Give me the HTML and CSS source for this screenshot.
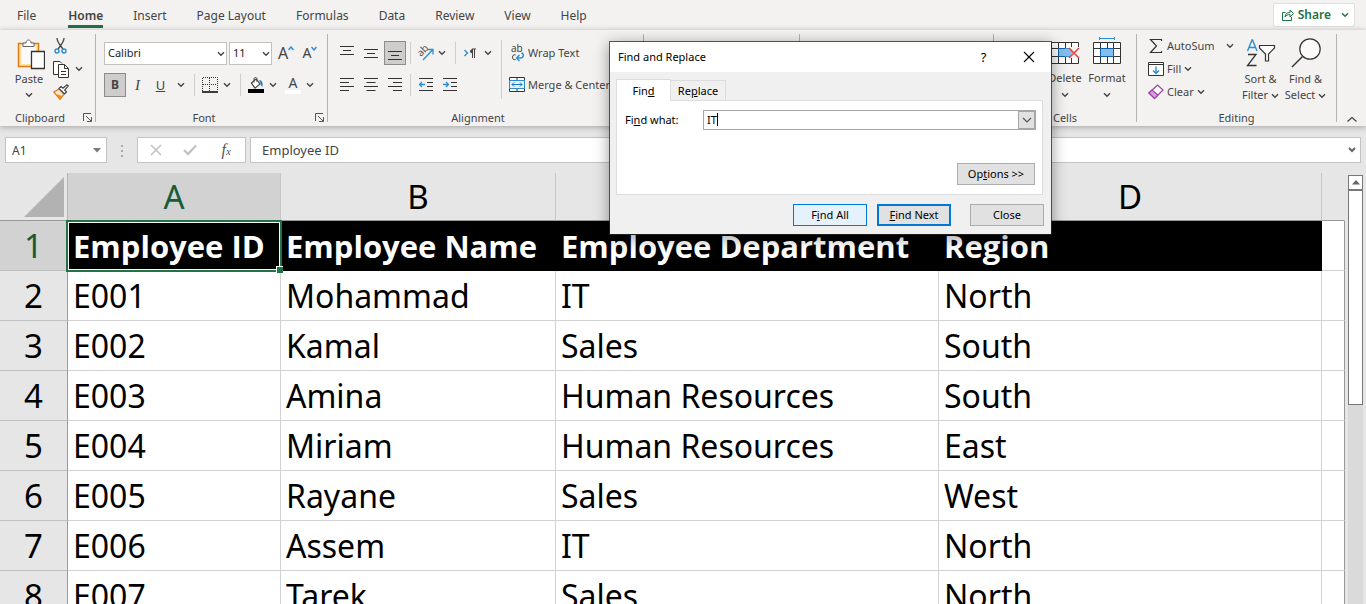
FILE: index.html
```html
<!DOCTYPE html>
<html lang="en">
<head>
<meta charset="utf-8">
<title>Employees - Spreadsheet</title>
<link rel="stylesheet" href="styles.css">
</head>
<body>
<svg class="defs" aria-hidden="true">
  <symbol id="chev" viewBox="0 0 8 6"><path d="M1 1.2 4 4.2 7 1.2" fill="none" stroke="#444" stroke-width="1.4"/></symbol>
  <symbol id="launch" viewBox="0 0 9 9"><path d="M.5 8V.5H8M3 3l5 5M8.500 4v4.500H4" fill="none" stroke="#555"/></symbol>
  <symbol id="grid" viewBox="0 0 30 28"><path d="M1.500 5.500h27v21h-27zM1.500 11.500h27M1.500 19.500h27M8.500 5v22M21.500 5v22M15.500 5v6M15.500 20v6" fill="#fff" stroke="#333"/><path d="M8.500 11.500h13v8h-13z" fill="#83beec" stroke="#0f5fa8"/></symbol>
</svg>

<nav class="tabs">
  <a href="#file">File</a>
  <a href="#home" class="active">Home</a>
  <a href="#insert">Insert</a>
  <a href="#layout">Page Layout</a>
  <a href="#formulas">Formulas</a>
  <a href="#data">Data</a>
  <a href="#review">Review</a>
  <a href="#view">View</a>
  <a href="#help">Help</a>
  <button class="share">
    <svg width="12" height="12" viewBox="0 0 12 12" fill="none" stroke="#217346"><path d="M3.500 3.500h-3v8h9V8M3 8c.3-3 2-4.500 5-4.500V1l3.500 3.500L8 8V5.500C5.500 5.500 4 6.500 3 8z"/></svg>
    Share
    <svg class="share-chev" width="8" height="6" viewBox="0 0 8 6"><path d="M1 1.200 4 4.200 7 1.200" fill="none" stroke="#217346" stroke-width="1.400"/></svg>
  </button>
</nav>

<div class="ribbon">
  <section class="group clipboard">
    <div class="body">
      <button class="big paste">
        <svg width="28" height="32" viewBox="0 0 28 32"><path d="M1.500 5.500h20v23h-20z" fill="#fbe3a4" stroke="#de7b14" stroke-width="1.500"/><path d="M4.500 8h14v18h-14z" fill="#fafafa"/><path d="M6 8.500V5h3c0-4 5-4 5 0h3v3.500z" fill="#fff" stroke="#666"/><path d="M14.500 13.500h13v17h-13z" fill="#fff" stroke="#333" stroke-width="1.300"/></svg>
        <span>Paste</span><svg class="chev"><use href="#chev"/></svg>
      </button>
      <div class="stack">
        <button class="tool" aria-label="Cut"><svg width="16" height="16" viewBox="0 0 16 16" fill="none"><path d="M4 0c0 4 3 7 6 11M11 0c0 4-3 7-6 11" stroke="#444" stroke-width="1.300"/><circle cx="4" cy="13" r="2" stroke="#2b8ed0" stroke-width="1.400"/><circle cx="11" cy="13" r="2" stroke="#2b8ed0" stroke-width="1.400"/></svg></button>
        <button class="tool" aria-label="Copy"><svg width="17" height="17" viewBox="0 0 17 17" fill="#fff" stroke="#333"><path d="M5.500 13.500h-5V.5h6.500l2 2"/><path d="M5.500 3.500h6l4 4v9h-10z"/><path d="M11.500 3.500v4h4M8 10.500h5M8 13.500h5" fill="none"/></svg><svg class="chev"><use href="#chev"/></svg></button>
        <button class="tool" aria-label="Format Painter"><svg width="16" height="16" viewBox="0 0 16 16"><path d="M.8 8 6 5l5 5-4 5.300z" fill="#fde6c8" stroke="#de7b14" stroke-width="1.300"/><path d="m3 10 4 5 2-3z" fill="#ef8a1d"/><path d="m6 4.500 2-2 2 1.800L14 .8 15.300 2l-3.600 4 1.800 2-2 2z" fill="#fff" stroke="#444" stroke-width="1.200"/></svg></button>
      </div>
    </div>
    <div class="label launchable"><span>Clipboard</span><button aria-label="Clipboard settings"><svg width="9" height="9"><use href="#launch"/></svg></button></div>
  </section>

  <section class="group font">
    <div class="body rows">
      <div class="row">
        <div class="combo family"><select aria-label="Font"><option>Calibri</option></select><svg class="chev"><use href="#chev"/></svg></div>
        <div class="combo size"><select aria-label="Font size"><option>11</option></select><svg class="chev"><use href="#chev"/></svg></div>
        <button class="grow" aria-label="Increase font size"><span class="letter-lg">A</span><svg width="6" height="5" viewBox="0 0 6 5"><path d="m.5 4 2.500-3 2.500 3" fill="none" stroke="#2b8ed0" stroke-width="1.400"/></svg></button>
        <button class="grow" aria-label="Decrease font size"><span class="letter">A</span><svg width="6" height="5" viewBox="0 0 6 5"><path d="m.5 1 2.500 3 2.500-3" fill="none" stroke="#2b8ed0" stroke-width="1.400"/></svg></button>
      </div>
      <div class="row">
        <button class="toggle on"><b>B</b></button>
        <button class="toggle"><i>I</i></button>
        <button class="toggle"><u>U</u></button>
        <svg class="chev side"><use href="#chev"/></svg>
        <span class="sep"></span>
        <button aria-label="Borders"><svg width="16" height="16" viewBox="0 0 16 16"><path d="M.5 14V.5h15V14M7.500 1v13M1 7.500h14" fill="none" stroke="#333" stroke-dasharray="1 1"/><path d="M0 15h16" stroke="#000" stroke-width="1.500"/></svg></button>
        <svg class="chev side"><use href="#chev"/></svg>
        <span class="sep"></span>
        <button aria-label="Fill color"><svg width="16" height="16" viewBox="0 0 16 16"><path d="m3.500 6 4.500-4 4 5-5 4.200z" fill="#fff" stroke="#444" stroke-width="1.200"/><path d="M6 5.500V2c0-2 3-2 3 0v3" fill="none" stroke="#444"/><path d="M11 3c3 0 4 3 3.500 7-1-1-2-2.500-2-4z" fill="#1f77bd"/><path d="M0 12h16v4H0z"/></svg></button>
        <svg class="chev side"><use href="#chev"/></svg>
        <button class="font-color" aria-label="Font color"><span>A</span></button>
        <svg class="chev side"><use href="#chev"/></svg>
      </div>
    </div>
    <div class="label launchable"><span>Font</span><button aria-label="Font settings"><svg width="9" height="9"><use href="#launch"/></svg></button></div>
  </section>

  <section class="group align">
    <div class="body">
      <div class="rows">
        <div class="row">
          <button class="al" aria-label="Top align"><svg width="14" height="14" viewBox="0 0 14 14"><path d="M0 .5h14M3 4.500h8M0 8.500h14" stroke="#333"/></svg></button>
          <button class="al" aria-label="Middle align"><svg width="14" height="14" viewBox="0 0 14 14"><path d="M0 3.500h14M3 7.500h8M0 11.500h14" stroke="#333"/></svg></button>
          <button class="al on" aria-label="Bottom align"><svg width="14" height="14" viewBox="0 0 14 14"><path d="M0 5.500h14M3 9.500h8M0 13.500h14" stroke="#333"/></svg></button>
          <span class="sep tight"></span>
          <button aria-label="Orientation"><svg class="spill" width="15" height="16" viewBox="0 0 15 16"><text x="0" y="9" transform="rotate(-45 5 7)" font-size="10" font-family="Open Sans, sans-serif" fill="#444">ab</text><path d="M5 15 14.500 5M10 4.500h5v5" fill="none" stroke="#2b8ed0" stroke-width="1.300"/></svg></button>
          <svg class="chev side"><use href="#chev"/></svg>
          <span class="sep"></span>
          <button aria-label="Text direction"><svg width="16" height="14" viewBox="0 0 16 14"><path d="m1.500 4 3 3-3 3" fill="none" stroke="#2b8ed0" stroke-width="1.400"/><path d="M9.500 3v9M11.500 3v9M13 3H9" stroke="#444" fill="none"/><path d="M10 3c-4 0-4 4.500 0 4.500z" fill="#444"/></svg></button>
          <svg class="chev side"><use href="#chev"/></svg>
        </div>
        <div class="row">
          <button class="al" aria-label="Align left"><svg width="14" height="14" viewBox="0 0 14 14"><path d="M0 .5h14M0 4.500h9M0 8.500h14M0 12.500h9" stroke="#333"/></svg></button>
          <button class="al" aria-label="Center"><svg width="14" height="14" viewBox="0 0 14 14"><path d="M0 .5h14M2.500 4.500h9M0 8.500h14M2.500 12.500h9" stroke="#333"/></svg></button>
          <button class="al" aria-label="Align right"><svg width="14" height="14" viewBox="0 0 14 14"><path d="M0 .5h14M5 4.500h9M0 8.500h14M5 12.500h9" stroke="#333"/></svg></button>
          <span class="sep second"></span>
          <button aria-label="Decrease indent"><svg width="16" height="14" viewBox="0 0 16 14" fill="none"><path d="M1 .5h14M9 4.500h6M9 8.500h6M1 12.500h14" stroke="#333"/><path d="M7 6.500H1.500M4 4 1.500 6.500 4 9" stroke="#2b8ed0" stroke-width="1.300"/></svg></button>
          <button class="indent" aria-label="Increase indent"><svg width="16" height="14" viewBox="0 0 16 14" fill="none"><path d="M1 .5h14M9 4.500h6M9 8.500h6M1 12.500h14" stroke="#333"/><path d="M1 6.500h5.500M4 4l2.500 2.500L4 9" stroke="#2b8ed0" stroke-width="1.300"/></svg></button>
        </div>
      </div>
      <span class="sep tall"></span>
      <div class="rows">
        <div class="row"><button class="text-tool"><svg class="spill" width="16" height="18" viewBox="0 0 16 18"><text x="2" y="8" font-size="10" font-family="Open Sans, sans-serif" fill="#333">ab</text><path d="M6.500 11c-4-1.500-4 6 0 4.500" fill="none" stroke="#333"/><path d="M12.500 9c3 1 2 5-1 5H8M10.500 11 7.500 14l3 3" fill="none" stroke="#2b8ed0" stroke-width="1.400"/></svg>Wrap Text</button></div>
        <div class="row"><button class="text-tool"><svg width="16" height="16" viewBox="0 0 16 16"><path d="M.5.5h15v14H.5zM.5 3.500h15M.5 11.500h15M8 .5v3M8 11.500v3" fill="#fff" stroke="#333"/><path d="M.5 3.500h15v8H.5z" fill="#e3f1fb" stroke="#2b8ed0"/><path d="M3 7.500h10M5 5.500l-2 2 2 2M11 5.500l2 2-2 2" fill="none" stroke="#1f77bd"/></svg>Merge &amp; Center</button></div>
      </div>
    </div>
    <div class="label launchable"><span>Alignment</span></div>
  </section>

  <section class="group number"></section>

  <section class="group styles">
    <div class="body">
      <svg width="30" height="28"><use href="#grid"/></svg>
      <svg width="30" height="28"><use href="#grid"/></svg>
      <svg width="30" height="28"><use href="#grid"/></svg>
    </div>
  </section>

  <section class="group cells">
    <div class="body">
      <button class="big"><svg width="30" height="28"><use href="#grid"/></svg><span>Insert</span><svg class="chev"><use href="#chev"/></svg></button>
      <button class="big"><svg width="30" height="28" viewBox="0 0 30 28"><use href="#grid" width="30" height="28"/><path d="M20 10h10v11H20z" fill="#f3f2f1"/><path d="M15 11.500h5l3 4-3 4h-5z" fill="#83beec"/><path d="m19 11 10 10M29 11 19 21" stroke="#e8413c" stroke-width="1.500"/></svg><span>Delete</span><svg class="chev"><use href="#chev"/></svg></button>
      <button class="big"><svg width="30" height="28" viewBox="0 0 30 28"><use href="#grid" width="30" height="28"/><path d="M7.500 0v3M22.500 0v3M8 1.500h14" stroke="#2b8ed0"/></svg><span>Format</span><svg class="chev"><use href="#chev"/></svg></button>
    </div>
    <div class="label"><span>Cells</span></div>
  </section>

  <section class="group editing">
    <div class="body">
      <div class="stack">
        <button class="text-tool"><svg width="16" height="16" viewBox="0 0 16 16"><path d="M13.500 3V1.500h-11L8.500 8l-6 6.500h11V13" fill="none" stroke="#333" stroke-width="1.200"/></svg>AutoSum<svg class="chev far"><use href="#chev"/></svg></button>
        <button class="text-tool"><svg width="16" height="14" viewBox="0 0 16 14"><path d="M.5.5h15v13H.5zM.5 2.500h15" fill="#fff" stroke="#333"/><path d="M8 4.500v7M5 8.500l3 3 3-3" fill="none" stroke="#2b8ed0" stroke-width="1.400"/></svg>Fill<svg class="chev"><use href="#chev"/></svg></button>
        <button class="text-tool"><svg width="16" height="16" viewBox="0 0 16 16"><path d="m1 9 8.500-8L15 6l-8.500 8.500z" fill="#fff" stroke="#9b3fa5" stroke-width="1.200"/><path d="m1 9 3-3 6 5-3.500 3.500z" fill="#d7a0dd" stroke="#9b3fa5" stroke-width="1.200"/></svg>Clear<svg class="chev"><use href="#chev"/></svg></button>
      </div>
      <button class="big wide"><svg width="30" height="30" viewBox="0 0 30 30" fill="none"><path d="m1.500 13 4.500-11h.5L11 13M3 9.500h6.500" stroke="#2b8ed0" stroke-width="1.400"/><path d="M2 16.500h8L1.500 27.500H10.500" stroke="#333" stroke-width="1.300"/><path d="M13.500 7.500h15v2.500l-6 6v7h-3v-7l-6-6z" fill="#fff" stroke="#333" stroke-width="1.200"/></svg><span>Sort &amp;<br>Filter <svg class="chev"><use href="#chev"/></svg></span></button>
      <button class="big wide"><svg width="30" height="30" viewBox="0 0 30 30"><path d="M11.500 18.500 1 29" stroke="#333" stroke-width="1.400"/><circle cx="19" cy="11" r="10.200" fill="#fafafa" stroke="#333" stroke-width="1.200"/></svg><span>Find &amp;<br>Select <svg class="chev"><use href="#chev"/></svg></span></button>
    </div>
    <div class="label"><span>Editing</span></div>
  </section>
  <button class="collapse" aria-label="Collapse ribbon"><svg width="10" height="6" viewBox="0 0 10 6"><path d="m.5 5.500 4.500-4 4.500 4" fill="none" stroke="#444" stroke-width="1.200"/></svg></button>
</div>

<div class="formula-bar">
  <div class="name-box"><input aria-label="Name box" value="A1"><svg width="8" height="5" viewBox="0 0 8 5"><path d="M0 0h8L4 4.500z" fill="#777"/></svg></div>
  <svg class="dots" width="3" height="12" viewBox="0 0 3 12"><path d="M0 0h2v2H0zM0 5h2v2H0zM0 10h2v2H0z" fill="#aaa"/></svg>
  <div class="fx">
    <button aria-label="Cancel"><svg width="12" height="12" viewBox="0 0 12 12"><path d="m1 1 10 10M11 1 1 11" stroke="#c3c3c3" stroke-width="1.600"/></svg></button>
    <button aria-label="Enter"><svg width="14" height="12" viewBox="0 0 14 12"><path d="m1 6 4 4 8-8.500" fill="none" stroke="#c3c3c3" stroke-width="2.400"/></svg></button>
    <button class="fn" aria-label="Insert function"><i>f<small>x</small></i></button>
  </div>
  <div class="formula"><input aria-label="Formula" value="Employee ID"><svg width="8" height="6" viewBox="0 0 8 6"><path d="M1 1 4 4 7 1" fill="none" stroke="#666" stroke-width="2"/></svg></div>
</div>

<main class="sheet">
  <table>
    <colgroup><col class="c-num"><col class="c-a"><col class="c-b"><col class="c-c"><col class="c-d"><col></colgroup>
    <thead><tr><th class="corner"><svg width="40" height="40" viewBox="0 0 40 40"><path d="M40 0v40H0z" fill="#b2b2b2"/></svg></th><th class="sel">A</th><th>B</th><th>C</th><th>D</th><th></th></tr></thead>
    <tbody>
      <tr class="head"><th class="sel">1</th><td class="active-cell">Employee ID<span class="cursor"></span></td><td>Employee Name</td><td>Employee Department</td><td>Region</td><td></td></tr>
      <tr><th>2</th><td>E001</td><td>Mohammad</td><td>IT</td><td>North</td><td></td></tr>
      <tr><th>3</th><td>E002</td><td>Kamal</td><td>Sales</td><td>South</td><td></td></tr>
      <tr><th>4</th><td>E003</td><td>Amina</td><td>Human Resources</td><td>South</td><td></td></tr>
      <tr><th>5</th><td>E004</td><td>Miriam</td><td>Human Resources</td><td>East</td><td></td></tr>
      <tr><th>6</th><td>E005</td><td>Rayane</td><td>Sales</td><td>West</td><td></td></tr>
      <tr><th>7</th><td>E006</td><td>Assem</td><td>IT</td><td>North</td><td></td></tr>
      <tr><th>8</th><td>E007</td><td>Tarek</td><td>Sales</td><td>North</td><td></td></tr>
    </tbody>
  </table>
  <div class="scrollbar">
    <button aria-label="Scroll up"><svg width="8" height="5" viewBox="0 0 8 5"><path d="M4 0 8 4.500H0z" fill="#666"/></svg></button>
    <div class="thumb"></div>
  </div>
</main>

<div class="dialog" role="dialog" aria-labelledby="dlg-title">
  <header>
    <span id="dlg-title">Find and Replace</span>
    <button class="help" aria-label="Help">?</button>
    <button aria-label="Close dialog"><svg width="12" height="12" viewBox="0 0 12 12"><path d="m1 1 10 10M11 1 1 11" stroke="#000" stroke-width="1.100"/></svg></button>
  </header>
  <div class="dlg-tabs"><button class="current">Fin<u>d</u></button><button>Re<u>p</u>lace</button></div>
  <div class="panel">
    <div class="field">
      <label for="what">Fi<u>n</u>d what:</label>
      <div class="what"><input id="what" value="IT"><span class="caret"></span><button aria-label="Previous searches"><svg width="10" height="6" viewBox="0 0 10 6"><path d="m1 1 4 4 4-4" fill="none" stroke="#555" stroke-width="1.200"/></svg></button></div>
    </div>
    <button class="btn options">Op<u>t</u>ions &gt;&gt;</button>
  </div>
  <footer>
    <button class="btn hot">F<u>i</u>nd All</button>
    <button class="btn default"><u>F</u>ind Next</button>
    <button class="btn close">Close</button>
  </footer>
</div>
</body>
</html>
```
FILE: styles.css
```css
* { box-sizing: border-box; }

body {
  margin: 0;
  height: 100vh;
  overflow: hidden;
  display: flex;
  flex-direction: column;
  position: relative;
  background: #e6e6e6;
  color: #444;
  font: 12px/16px "Noto Sans", "Open Sans", sans-serif;
}

button, input, select { font: inherit; color: inherit; }
button { background: none; border: 0; padding: 0; margin: 0; display: flex; align-items: center; justify-content: center; }
svg { display: block; flex: none; }
.spill { overflow: visible; }
.defs { position: absolute; width: 0; height: 0; }
.chev { width: 8px; height: 6px; }

/* Ribbon tabs */
.tabs { flex: none; height: 30px; display: flex; align-items: flex-start; gap: 30px; padding: 3px 11px 0 17px; background: #f3f2f1; }
.tabs a { color: #444; text-decoration: none; height: 24px; line-height: 24px; margin-top: 1px; }
.tabs .active { font-weight: 600; border-bottom: 3px solid #217346; box-sizing: content-box; height: 21px; margin-left: 2px; }
.share { margin-left: auto; height: 24px; padding: 0 5px 0 8px; gap: 4px; background: #fff; border: 1px solid #e1dfdd; border-radius: 2px; color: #217346; font-weight: 600; }
.share-chev { margin-left: 6px; }

/* Ribbon */
.ribbon { flex: none; height: 96px; display: flex; background: #f3f2f1; box-shadow: 0 1px 6px rgba(0, 0, 0, .3); padding: 4px 0; z-index: 1; font-size: 12px; }
.group { flex: none; display: flex; flex-direction: column; border-right: 1px solid #b5b3b1; }
.body { flex: 1; min-height: 0; display: flex; }
.label { height: 17px; line-height: 17px; display: flex; margin-bottom: -4px; font-size: 11px; }
.label span { flex: 1; text-align: center; }
.launchable { padding-right: 1px; }
.launchable span:only-child { margin-right: 14px; }
.launchable button { width: 14px; }
.clipboard { width: 96px; }
.font { width: 232px; }
.align { width: 316px; }
.number { width: 156px; }
.styles { flex: 1; }
.cells { width: 143px; }
.editing { width: 200px; }
.collapse { width: 29px; align-self: flex-end; height: 6px; }

.big { flex-direction: column; justify-content: flex-start; width: 42px; font-size: 11px; gap: 5px; }
.big .chev { margin-top: 1px; }
.cells .body { padding: 3px 8px 0; }
.paste { width: 42px; margin: 4px 0 0 8px; gap: 1px; }
.paste > svg:first-child { margin-left: 4px; }
.paste .chev { margin-top: 4px; }
.clipboard .stack { padding: 4px 0 0 3px; }
.tool { height: 23px; gap: 5px; align-items: flex-start; }
.tool .chev { margin-top: 5px; }

.rows { display: flex; flex-direction: column; gap: 8px; padding-top: 7px; }
.font .rows { padding-left: 8px; }
.row { display: flex; align-items: center; height: 24px; }
.combo { position: relative; height: 23px; margin-right: 2px; }
.combo select { appearance: none; width: 100%; height: 100%; border: 1px solid #c3c1bf; border-radius: 0; background: #fff; color: #222; font-size: 11px; padding: 0 3px; }
.combo .chev { position: absolute; right: 2px; top: 9px; }
.family { width: 123px; }
.size { width: 43px; }
.grow { align-items: flex-start; width: 24px; }
.grow svg { margin-top: 3px; }
.letter-lg { font-size: 16px; line-height: 20px; }
.letter { font-size: 14px; line-height: 20px; }
.toggle { width: 23px; height: 24px; }
.toggle i { font-family: "Liberation Serif", serif; font-size: 15px; }
.toggle u { font-size: 13px; }
.on { width: 22px; background: #cfcdcc; border: 1px solid #8e8c8a; }
.side { margin: 0 2px 0 5px; }
.sep { width: 1px; height: 22px; background: #cfcdcc; margin: 0 7px; }
.tight { margin-left: 4px; }
.second { margin-left: 2px; }
.tall { height: 59px; margin: 6px 7px 0; }
.font-color { width: 16px; margin-left: 6px; height: 18px; line-height: 14px; border-bottom: 4px solid #fff; font-size: 14px; }
.align .body { padding-left: 8px; }
.al { width: 22px; height: 24px; margin-right: 2px; }
.al.on { margin-right: 0; }
.indent { margin-left: 8px; }
.text-tool { gap: 3px; white-space: nowrap; font-size: 11px; }
.styles .body { padding: 3px 14px 0 30px; justify-content: space-between; }

.editing .body { padding: 0 6px 0 11px; }
.editing .stack { width: 90px; }
.editing .text-tool { height: 23px; }
.far { margin-left: 8px; }
.wide { width: 45px; padding-top: 4px; gap: 3px; }
.wide span { white-space: nowrap; }
.wide .chev { display: inline-block; margin: 0; }

/* Formula bar */
.formula-bar { flex: none; height: 47px; display: flex; align-items: flex-start; padding: 11px 5px 0; font-size: 13px; }
.name-box, .fx, .formula { height: 26px; border: 1px solid #c3c3c3; background: #fff; display: flex; align-items: center; }
.formula-bar input { flex: 1; min-width: 0; border: 0; outline: 0; background: none; padding: 0; height: 24px; }
.name-box { width: 102px; padding: 0 5px 0 6px; }
.name-box input { font-size: 12px; }
.dots { margin: 8px 13px 0 14px; }
.fx { width: 109px; justify-content: space-around; padding: 0 1px; }
.fn { width: 14px; font: 16px "Liberation Serif", serif; color: #555; }
.fn small { font-size: 11px; }
.formula { flex: 1; margin-left: 4px; padding: 0 4px 0 11px; }

/* Worksheet */
.sheet { flex: 1; min-height: 0; overflow: hidden; display: flex; color: #000; }
table { flex: 1; width: 100%; table-layout: fixed; border-collapse: separate; border-spacing: 0; height: 448px; }
.c-num { width: 68px; }
.c-a { width: 213px; }
.c-b { width: 275px; }
.c-c, .c-d { width: 383px; }
th { font-weight: 400; font-size: 33px; line-height: 40px; padding: 0; background: #e6e6e6; border-right: 1px solid #c6c6c6; border-bottom: 1px solid #999; }
thead th { height: 48px; }
thead th:last-child { border-right-color: transparent; }
thead .corner { border-right-color: #b5b5b5; }
.corner svg { margin: 0 0 0 24px; }
.sel { background: #d2d2d2; color: #185c37; }
tbody th { border-right-color: #999; border-bottom-color: #c0c0c0; }
td { height: 50px; padding: 0 0 0 5px; font-size: 32px; line-height: 40px; background: #fff; white-space: nowrap; border-right: 1px solid #d2d2d2; border-bottom: 1px solid #d2d2d2; }
td:last-child { border-right-color: #999; }
.head td { background: #000; color: #fff; font-family: "Open Sans", sans-serif; font-size: 31px; font-weight: 700; border-color: #000; }
.head td:last-child { background: #fff; border-color: #d2d2d2; border-right-color: #999; }
.active-cell { position: relative; }
.cursor { position: absolute; inset: -1px -2px -2px -2px; border: 2px solid #217346; box-shadow: inset 0 0 0 1px #fff; }
.cursor::after { content: ""; position: absolute; right: -3px; bottom: -3px; width: 6px; height: 6px; background: #217346; border: solid #fff; border-width: 1px 0 0 1px; }
.scrollbar { flex: none; width: 15px; margin: 2px 3px 0 3px; background: #dadada; }
.scrollbar button { width: 15px; height: 15px; background: #fff; border: 1px solid #777; }
.thumb { height: 215px; background: #fff; border: 1px solid #777; }

/* Find and Replace */
.dialog { position: absolute; z-index: 2; left: 609px; top: 41px; width: 443px; padding-bottom: 8px; border: 1px solid rgba(40, 40, 40, .75); background: #f0f0f0; background-clip: padding-box; box-shadow: 0 3px 14px rgba(0, 0, 0, .4); color: #000; font-size: 11px; }
.dialog header { height: 30px; display: flex; align-items: center; background: #fff; padding-left: 8px; }
.dialog header span { flex: 1; }
.dialog header button { width: 45px; height: 30px; }
.dialog .help { font-size: 13px; }
.dlg-tabs { display: flex; align-items: flex-end; padding: 7px 7px 0 6px; }
.dlg-tabs button { height: 20px; width: 55px; border: 1px solid #dcdcdc; border-left: 0; border-bottom: 0; padding-top: 1px; }
.dlg-tabs .current { height: 22px; width: 55px; background: #fff; border-left: 1px solid #dcdcdc; margin-bottom: -1px; z-index: 1; }
.panel { margin: 0 8px 0 6px; height: 95px; padding: 9px 6px 9px 8px; background: #fff; border: 1px solid #dcdcdc; display: flex; flex-direction: column; justify-content: space-between; }
.field { display: flex; align-items: center; }
.field label { width: 78px; }
.what { flex: 1; display: flex; position: relative; height: 20px; border: 1px solid #a5a5aa; }
.what input { flex: 1; border: 0; outline: 0; padding: 0 3px; }
.what button { width: 17px; background: #e1e1e1; border: 1px solid #a5a5aa; }
.caret { position: absolute; left: 13px; top: 2px; width: 1px; height: 13px; background: #000; }
.btn { height: 22px; width: 74px; background: #e1e1e1; border: 1px solid #adadad; }
.options { width: 78px; align-self: flex-end; margin-right: 1px; }
.dialog footer { display: flex; justify-content: flex-end; gap: 10px; padding: 9px 7px 0; }
.hot { background: #e5f1fb; border-color: #0078d7; }
.default { border: 2px solid #0078d7; }
.close { margin-left: 9px; }
```
